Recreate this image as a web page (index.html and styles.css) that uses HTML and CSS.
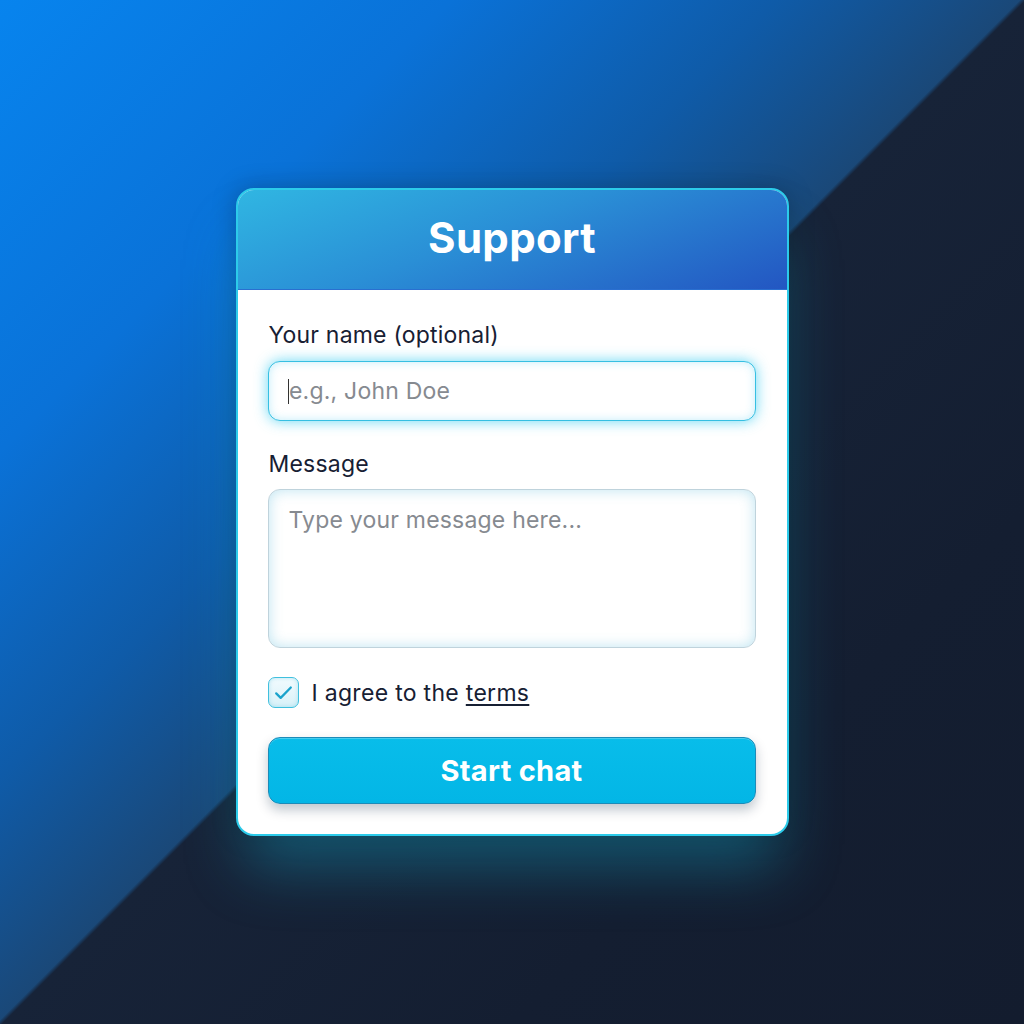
FILE: index.html
```html
<!DOCTYPE html>
<html lang="en">
<head>
<meta charset="utf-8">
<title>Support</title>
<link rel="stylesheet" href="styles.css">
</head>
<body>
<main class="stage">
  <section class="card">
    <header class="card-head">
      <h1 class="title">Support</h1>
    </header>
    <form class="card-body">
      <label class="label" for="name">Your name (optional)</label>
      <div class="input input-focus">
        <span class="caret"></span><span class="placeholder">e.g., John Doe</span>
      </div>
      <label class="label label-msg" for="msg">Message</label>
      <div class="textarea">
        <span class="placeholder">Type your message here...</span>
      </div>
      <div class="check-row">
        <span class="checkbox">
          <svg viewBox="0 0 24 24" width="27" height="27" aria-hidden="true"><path d="M5.5 12.8l4 4L18.5 7.5" fill="none" stroke="#1aa3cc" stroke-width="2" stroke-linecap="round" stroke-linejoin="round"/></svg>
        </span>
        <span class="check-text">I agree to the <span class="terms">terms</span></span>
      </div>
      <div class="button">Start chat</div>
    </form>
  </section>
</main>
</body>
</html>
```

FILE: styles.css
```css
* { box-sizing: border-box; }
html, body { margin: 0; padding: 0; }
body {
  width: 1024px;
  height: 1024px;
  overflow: hidden;
  font-family: Inter, "Noto Sans", sans-serif;
  background: linear-gradient(135deg, #0784ee 0%, #0a72d8 22%, #0f5ba8 38%, #1a4878 49.8%, #172338 50.1%, #141e31 75%, #131c2e 100%);
}
.stage {
  width: 1024px;
  height: 1024px;
  display: flex;
  align-items: center;
  justify-content: center;
}
.card {
  width: 553px;
  height: 648px;
  border: 2px solid #2ccbea;
  border-radius: 18px;
  background: #ffffff;
  overflow: hidden;
  box-shadow: 0 40px 60px -10px rgba(20, 190, 225, 0.35), 0 0 24px rgba(0, 0, 0, 0.25);
  display: flex;
  flex-direction: column;
}
.card-head {
  height: 100px;
  flex: none;
  background: linear-gradient(160deg, #30b6e2 0%, #2a8fd6 45%, #2356c2 100%);
  display: flex;
  align-items: center;
  justify-content: center;
  border-bottom: 1px solid #2a6fd0;
}
.title {
  margin: 0;
  color: #ffffff;
  font-size: 42px;
  font-weight: 700;
  letter-spacing: 0.3px;
  padding-bottom: 4px;
}
.card-body {
  margin: 0;
  padding: 32px 31px 30px 30px;
  display: flex;
  flex-direction: column;
}
.label {
  font-size: 23px;
  letter-spacing: 0.2px;
  line-height: 26px;
  color: #172033;
  margin-left: 1px;
}
.label-msg { margin-top: 30px; }
.input {
  margin-top: 13px;
  height: 60px;
  border-radius: 12px;
  border: 1.5px solid #36bfe2;
  background: #ffffff;
  display: flex;
  align-items: center;
  padding-left: 19px;
  box-shadow: 0 0 14px rgba(40, 200, 240, 0.7), inset 0 0 10px rgba(120, 215, 245, 0.45);
}
.caret {
  width: 1.5px;
  height: 25px;
  background: #333;
}
.placeholder {
  font-size: 23px;
  letter-spacing: 0.2px;
  color: #868a90;
}
.textarea {
  margin-top: 12px;
  height: 159px;
  border-radius: 12px;
  border: 1px solid #bfd3dc;
  background: #ffffff;
  padding: 16px 20px;
  box-shadow: inset 0 0 14px rgba(110, 195, 225, 0.45);
}
.check-row {
  margin-top: 29px;
  height: 30px;
  display: flex;
  align-items: center;
  gap: 13px;
}
.checkbox {
  width: 31px;
  height: 31px;
  border-radius: 7px;
  border: 1.5px solid #40c0de;
  background: linear-gradient(180deg, #f2fbfe, #d8f1f8);
  display: flex;
  align-items: center;
  justify-content: center;
  box-shadow: inset 0 0 4px rgba(70, 190, 220, 0.35);
}
.check-text {
  font-size: 23px;
  letter-spacing: 0.3px;
  color: #172033;
  padding-top: 2px;
}
.terms {
  text-decoration: underline;
  text-underline-offset: 3px;
  text-decoration-thickness: 1.5px;
}
.button {
  margin-top: 30px;
  height: 67px;
  border-radius: 12px;
  border: 1px solid #1c8bb8;
  background: linear-gradient(180deg, #08bdea, #03b6e6);
  color: #ffffff;
  font-size: 29px;
  font-weight: 700;
  letter-spacing: 0.3px;
  display: flex;
  align-items: center;
  justify-content: center;
  box-shadow: 0 6px 12px rgba(0, 30, 60, 0.25), inset 0 1px 0 rgba(255, 255, 255, 0.25);
}
```
